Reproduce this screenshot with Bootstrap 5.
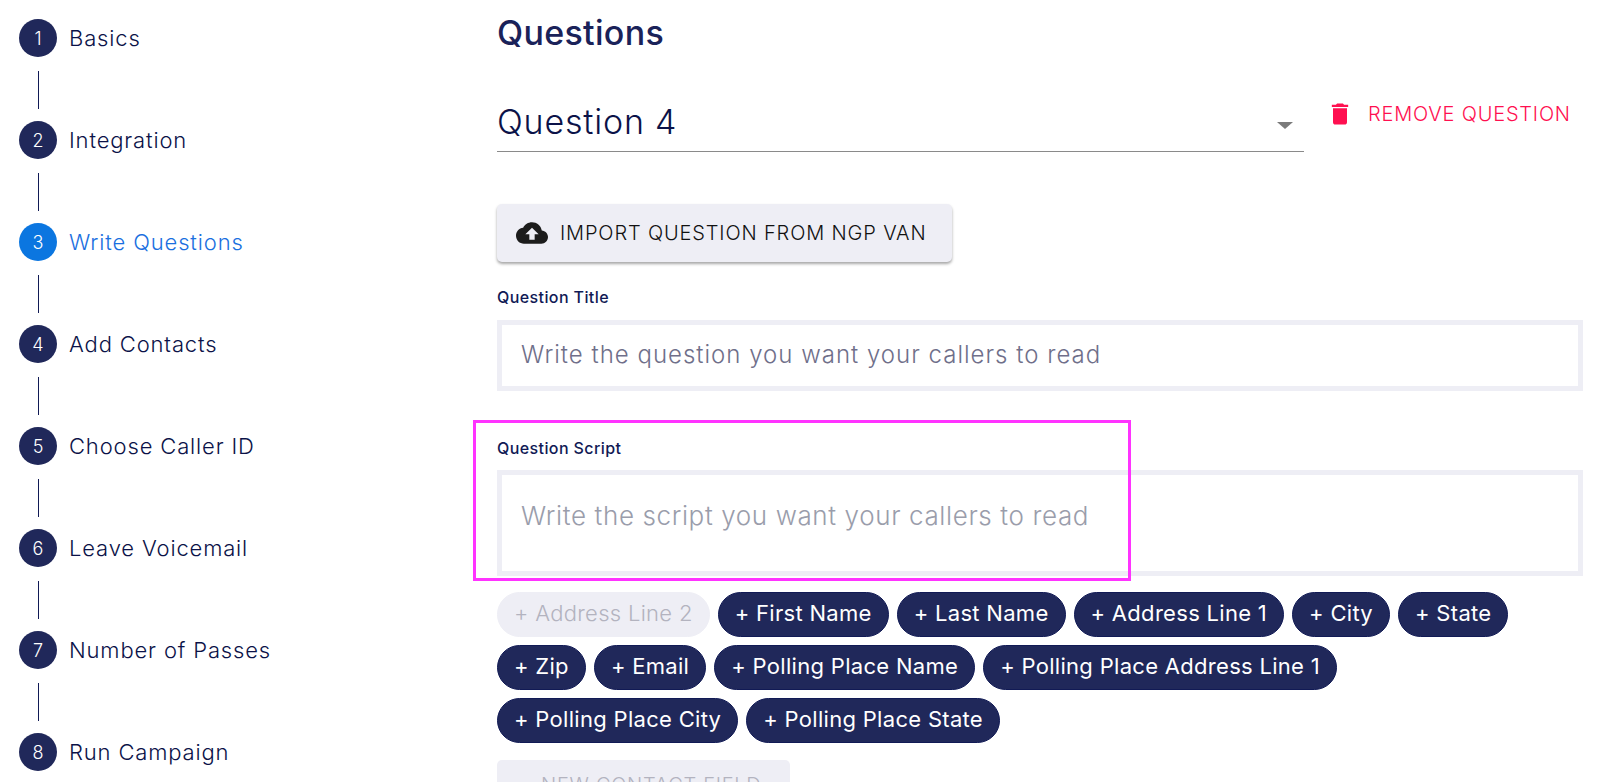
<!DOCTYPE html>
<html lang="en">
<head>
    <meta charset="UTF-8">
    <meta name="viewport" content="width=device-width, initial-scale=1.0">
    <title>Questions</title>
    <link href="https://cdn.jsdelivr.net/npm/bootstrap@5.3.0/dist/css/bootstrap.min.css" rel="stylesheet">
    <style>
        html, body { height: 782px; overflow: hidden; }
        body { font-family: "Inter", "Liberation Sans", sans-serif; background: #fff; color: #0b1248; }
        .page-wrap { height: 782px; overflow: hidden; }
        .stepper { width: 497px; flex: none; padding: 19px 0 0 19px; }
        .step-row { display: flex; align-items: center; gap: 12px; font-size: 22px; font-weight: 300; letter-spacing: .85px; height: 38px; }
        .step-num { width: 38px; height: 38px; border-radius: 50%; background: #20285a; color: #fff; font-size: 18px; letter-spacing: 0; display: flex; align-items: center; justify-content: center; flex: none; }
        .step-line { width: 1px; height: 38px; margin: 14px 0 12px 19px; background: #111a55; }
        .step-active { color: #1a6fe0; }
        .step-active .step-num { background: #0b76e0; }
        .main-col { width: 1086px; flex: none; position: relative; }
        .page-title { font-size: 34px; font-weight: 500; letter-spacing: .3px; line-height: 40px; margin: 13px 0 0; color: #1a2259; }
        .question-row { margin-top: 28px; height: 71px; }
        .question-select { width: 807px; height: 71px; border-bottom: 1px solid #8a8a8a; font-size: 34px; font-weight: 300; letter-spacing: .8px; padding-top: 10px; display: flex; justify-content: space-between; align-items: center; padding-right: 11px; }
        .select-arrow { width: 0; height: 0; border-left: 8px solid transparent; border-right: 8px solid transparent; border-top: 7px solid #7b7b7b; margin-top: 8px; }
        .remove-btn { color: #ff0f50; font-size: 20px; font-weight: 300; letter-spacing: .8px; display: flex; align-items: center; gap: 14px; margin-left: 22px; margin-top: -6px; }
        .import-btn { margin-top: 52px; width: 455px; height: 58px; background: #eeeef5; color: #111; border: 0; border-radius: 5px; box-shadow: 0 2px 3px rgba(0,0,0,.35); font-size: 20px; font-weight: 300; letter-spacing: .85px; padding: 0 0 0 19px; display: flex; align-items: center; gap: 12px; }
        .field-label { font-size: 16px; font-weight: 500; letter-spacing: .4px; line-height: 20px; margin: 25px 0 13px; display: block; color: #111a55; }
        .field-box { border: 5px solid #eeeef5; height: 71px; padding: 0 19px 2px; font-size: 24px; font-weight: 300; letter-spacing: 1px; color: #6f6f8a; display: flex; align-items: center; }
        .script-box { height: 106px; color: #9a9dab; padding-bottom: 16px; font-size: 26px; letter-spacing: .62px; }
        .script-label { margin: 47px 0 12px; }
        .chip-wrap { display: flex; flex-wrap: wrap; gap: 8px; margin-top: 16px; }
        .chip-item { height: 45px; padding: 0 16px 2px; border-radius: 23px; background: #20285a; color: #fff; font-size: 22px; font-weight: 400; letter-spacing: .3px; display: flex; align-items: center; border: 1px solid #111a55; }
        .chip-off { background: #eeeef5; color: #b3b3bf; border-color: #eeeef5; font-weight: 300; }
        .new-field { margin-top: 17px; width: 293px; height: 50px; background: #eeeef5; color: #b3b3bf; border-radius: 5px; font-size: 20px; font-weight: 300; letter-spacing: .7px; padding: 10px 24px; }
        .pink-box { position: absolute; left: -24px; top: 420px; width: 658px; height: 161px; border: 3px solid #ff33ff; pointer-events: none; }
    </style>
</head>
<body>
    <div class="page-wrap d-flex">
        <div class="stepper">
            <div class="step-row"><span class="step-num">1</span>Basics</div>
            <div class="step-line"></div>
            <div class="step-row"><span class="step-num">2</span>Integration</div>
            <div class="step-line"></div>
            <div class="step-row step-active"><span class="step-num">3</span>Write Questions</div>
            <div class="step-line"></div>
            <div class="step-row"><span class="step-num">4</span>Add Contacts</div>
            <div class="step-line"></div>
            <div class="step-row"><span class="step-num">5</span>Choose Caller ID</div>
            <div class="step-line"></div>
            <div class="step-row"><span class="step-num">6</span>Leave Voicemail</div>
            <div class="step-line"></div>
            <div class="step-row"><span class="step-num">7</span>Number of Passes</div>
            <div class="step-line"></div>
            <div class="step-row"><span class="step-num">8</span>Run Campaign</div>
        </div>
        <div class="main-col">
            <h1 class="page-title">Questions</h1>
            <div class="question-row d-flex align-items-center">
                <div class="question-select">Question 4<span class="select-arrow"></span></div>
                <div class="remove-btn">
                    <svg width="28" height="28" viewBox="0 0 24 24" fill="#ff0f50"><path d="M6 19c0 1.1.9 2 2 2h8c1.1 0 2-.9 2-2V7H6v12zM19 4h-3.5l-1-1h-5l-1 1H5v2h14V4z"/></svg>
                    REMOVE QUESTION
                </div>
            </div>
            <button class="import-btn">
                <svg width="32" height="32" viewBox="0 0 24 24" fill="#1c1c1c"><path d="M19.35 10.04C18.67 6.59 15.64 4 12 4 9.11 4 6.6 5.64 5.35 8.04 2.34 8.36 0 10.91 0 14c0 3.31 2.69 6 6 6h13c2.76 0 5-2.24 5-5 0-2.64-2.05-4.78-4.65-4.96zM14 13v4h-4v-4H7l5-5 5 5h-3z"/></svg>
                IMPORT QUESTION FROM NGP VAN
            </button>
            <label class="field-label">Question Title</label>
            <div class="field-box">Write the question you want your callers to read</div>
            <label class="field-label script-label">Question Script</label>
            <div class="field-box script-box">Write the script you want your callers to read</div>
            <div class="chip-wrap">
                <span class="chip-item chip-off">+ Address Line 2</span>
                <span class="chip-item">+ First Name</span>
                <span class="chip-item">+ Last Name</span>
                <span class="chip-item">+ Address Line 1</span>
                <span class="chip-item">+ City</span>
                <span class="chip-item">+ State</span>
                <span class="chip-item">+ Zip</span>
                <span class="chip-item">+ Email</span>
                <span class="chip-item">+ Polling Place Name</span>
                <span class="chip-item">+ Polling Place Address Line 1</span>
                <span class="chip-item">+ Polling Place City</span>
                <span class="chip-item">+ Polling Place State</span>
            </div>
            <div class="new-field">+ NEW CONTACT FIELD</div>
            <div class="pink-box"></div>
        </div>
    </div>
    <script src="https://cdn.jsdelivr.net/npm/bootstrap@5.3.0/dist/js/bootstrap.bundle.min.js"></script>
</body>
</html>
